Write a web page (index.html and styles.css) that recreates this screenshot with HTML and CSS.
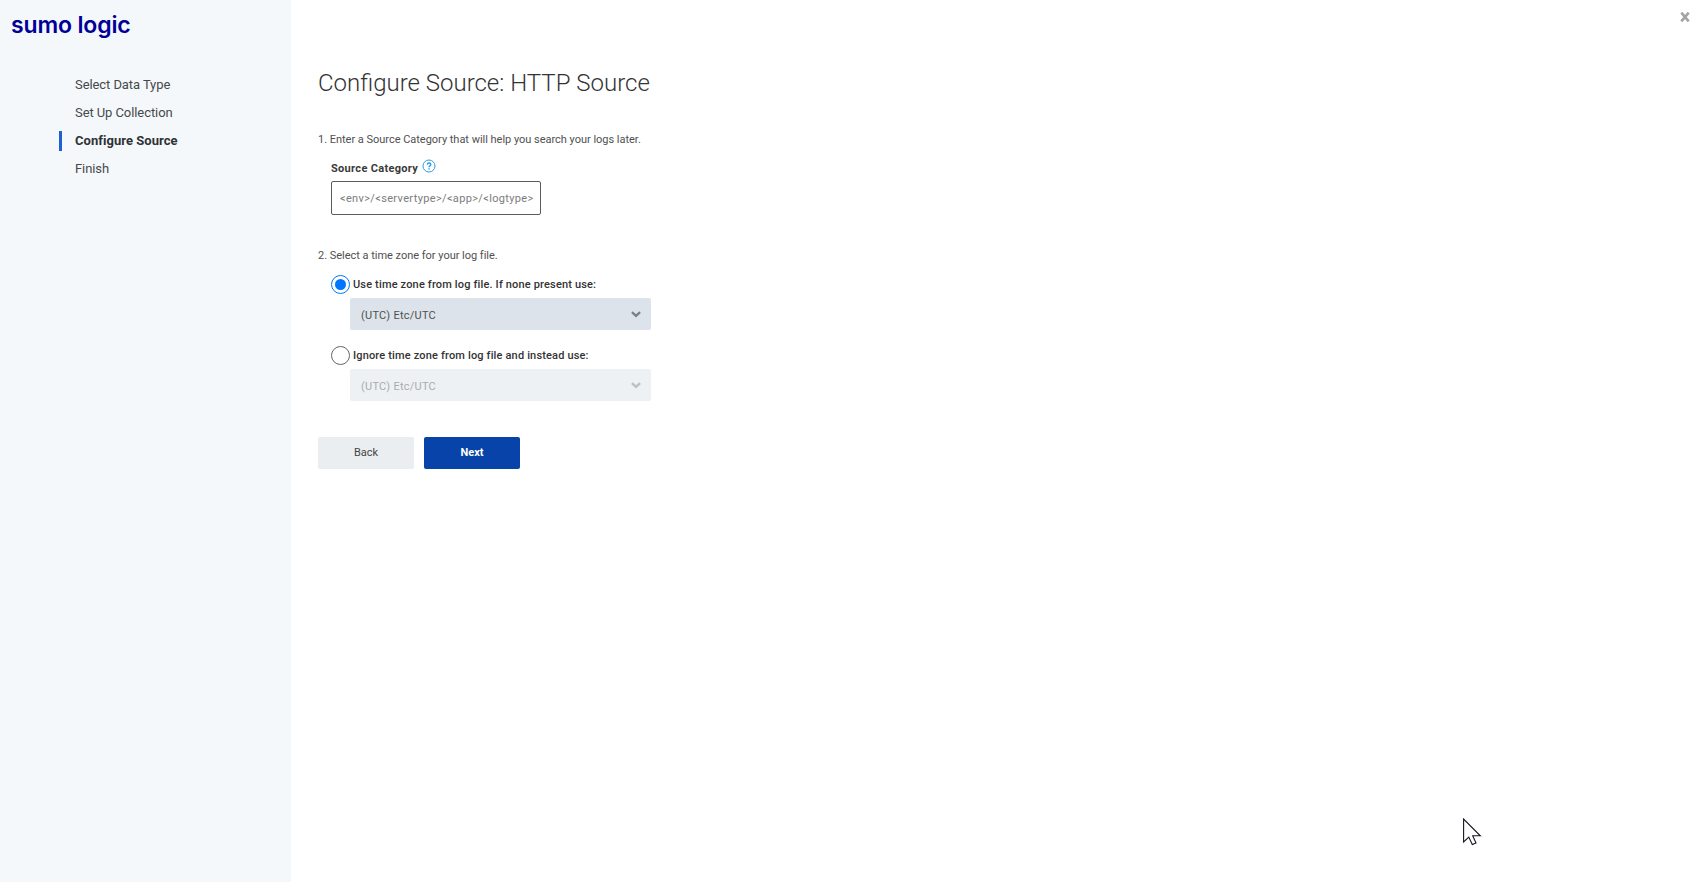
FILE: index.html
```html
<!DOCTYPE html>
<html lang="en">
<head>
<meta charset="utf-8">
<title>Sumo Logic - Configure Source</title>
<link rel="stylesheet" href="styles.css">
</head>
<body>
<div class="wizard">
  <aside class="sidebar">
    <div class="logo">sumo logic</div>
    <ul class="steps">
      <li class="step">Select Data Type</li>
      <li class="step">Set Up Collection</li>
      <li class="step step-active">Configure Source</li>
      <li class="step">Finish</li>
    </ul>
  </aside>
  <main class="content">
    <h1 class="title">Configure Source: HTTP Source</h1>
    <p class="prompt">1. Enter a Source Category that will help you search your logs later.</p>
    <div class="field">
      <div class="field-label">
        <label for="category">Source Category</label>
        <svg class="help" width="14" height="14" viewBox="0 0 14 14" fill="none" stroke="#2f9de4"><circle cx="7" cy="7" r="6"/><path d="M5.3 5.7C5.3 4.5 6 4 7 4s1.8.6 1.8 1.6C8.8 6.8 7 6.9 7 8.2" stroke-width="1.4"/><path d="M7 9.2v1.4" stroke-width="1.5"/></svg>
      </div>
      <input class="category" id="category" type="text" placeholder="&lt;env&gt;/&lt;servertype&gt;/&lt;app&gt;/&lt;logtype&gt;">
    </div>
    <p class="prompt">2. Select a time zone for your log file.</p>
    <div class="zones">
      <div class="zone">
        <label class="choice"><span class="radio radio-on"></span>Use time zone from log file. If none present use:</label>
        <div class="select">
          <span>(UTC) Etc/UTC</span>
          <svg width="10" height="7" viewBox="0 0 10 7" fill="none" stroke="#78818a" stroke-width="2.3"><path d="M.9 1.1 5 4.9 9.1 1.1"/></svg>
        </div>
      </div>
      <div class="zone">
        <label class="choice"><span class="radio"></span>Ignore time zone from log file and instead use:</label>
        <div class="select select-disabled">
          <span>(UTC) Etc/UTC</span>
          <svg width="10" height="7" viewBox="0 0 10 7" fill="none" stroke="#bbc0c4" stroke-width="2.3"><path d="M.9 1.1 5 4.9 9.1 1.1"/></svg>
        </div>
      </div>
    </div>
    <div class="actions">
      <button class="button">Back</button>
      <button class="button button-primary">Next</button>
    </div>
  </main>
  <svg class="close" width="10" height="10" viewBox="0 0 10 10" stroke="#a3a3a3" stroke-width="2.6"><path d="M1.3 .6 8.7 9.4M8.7 .6 1.3 9.4"/></svg>
</div>
<svg class="cursor" width="20" height="29" viewBox="0 0 20 29" fill="#fff" stroke="#15151f" stroke-width="1.1"><path d="M.6 1v23l5.2-4.9 3.5 7.5 3.7-1.6-3.3-7.2h7.6z"/></svg>
</body>
</html>
```
FILE: styles.css
```css
* { box-sizing: border-box; }
body {
  margin: 0;
  background: #fff;
  color: #505050;
  font: 11px/16px Roboto, sans-serif;
  overflow: hidden;
}
.wizard { display: flex; height: 100vh; }
.sidebar {
  flex: none;
  width: 291px;
  padding: 11px 0 0 11px;
  background: #f4f8fb;
}
.logo {
  height: 28px;
  color: #009;
  font: 600 23px/28px Inter, sans-serif;
  letter-spacing: -0.15px;
}
.steps {
  display: flex;
  flex-direction: column;
  gap: 8px;
  margin: 36px 0 0 48px;
  padding: 0;
  list-style: none;
}
.step {
  height: 20px;
  padding-left: 13px;
  border-left: 3px solid transparent;
  color: #46494c;
  font-size: 13px;
  line-height: 19px;
  letter-spacing: -0.08px;
}
.step-active {
  border-color: #1f5fd6;
  color: #2f3235;
  font-weight: 700;
  letter-spacing: 0.04px;
}
.content {
  display: flex;
  flex-direction: column;
  align-items: flex-start;
  flex: 1;
  padding: 67px 0 0 27px;
}
.title {
  margin: 0 0 32px;
  color: #333;
  font-size: 24px;
  font-weight: 300;
  line-height: 33px;
}
.prompt {
  height: 16px;
  margin: 0 0 8px;
  letter-spacing: -0.02px;
}
.field {
  height: 92px;
  padding: 5px 0 0 13px;
}
.field-label {
  display: flex;
  gap: 4px;
  height: 16px;
  color: #3a3a3a;
  font-weight: 700;
  letter-spacing: 0.32px;
}
.help { margin-top: -2px; }
.category {
  display: block;
  width: 210px;
  height: 34px;
  margin-top: 4px;
  padding: 0 7px 0 8px;
  border: 1px solid #5c5c5c;
  border-radius: 2px;
  background: #fff;
  font: 11px Roboto, sans-serif;
  letter-spacing: 0.35px;
}
.category::placeholder { color: #7c7c7c; }
.zones { margin-top: 3px; }
.zone { height: 71px; padding-left: 13px; }
.choice {
  display: flex;
  gap: 3px;
  height: 23px;
  color: #333;
  font-weight: 500;
  line-height: 19px;
  letter-spacing: 0.16px;
}
.radio {
  display: flex;
  align-items: center;
  justify-content: center;
  width: 19px;
  height: 19px;
  border: 1px solid #666;
  border-radius: 50%;
}
.radio-on { border-color: #0075ff; }
.radio-on::after {
  width: 11px;
  height: 11px;
  border-radius: 50%;
  background: #0075ff;
  content: "";
}
.select {
  display: flex;
  align-items: center;
  justify-content: space-between;
  width: 301px;
  height: 32px;
  margin-left: 19px;
  padding: 3px 10px 0 11px;
  border-radius: 2px;
  background: #dce3ea;
  letter-spacing: 0.25px;
}
.select svg { margin-bottom: 2px; }
.select-disabled { background: #edf1f4; color: #a9acaf; }
.actions { display: flex; gap: 10px; margin-top: 20px; }
.button {
  width: 96px;
  height: 32px;
  padding: 0 0 2px;
  border: 0;
  border-radius: 2px;
  background: #eaeef1;
  color: #444;
  font: 11px Roboto, sans-serif;
}
.button-primary { background: #0843a9; color: #fff; font-weight: 700; }
.close { margin: 12px 4px 0 0; }
.cursor { position: absolute; left: 1463px; top: 818px; }
```
